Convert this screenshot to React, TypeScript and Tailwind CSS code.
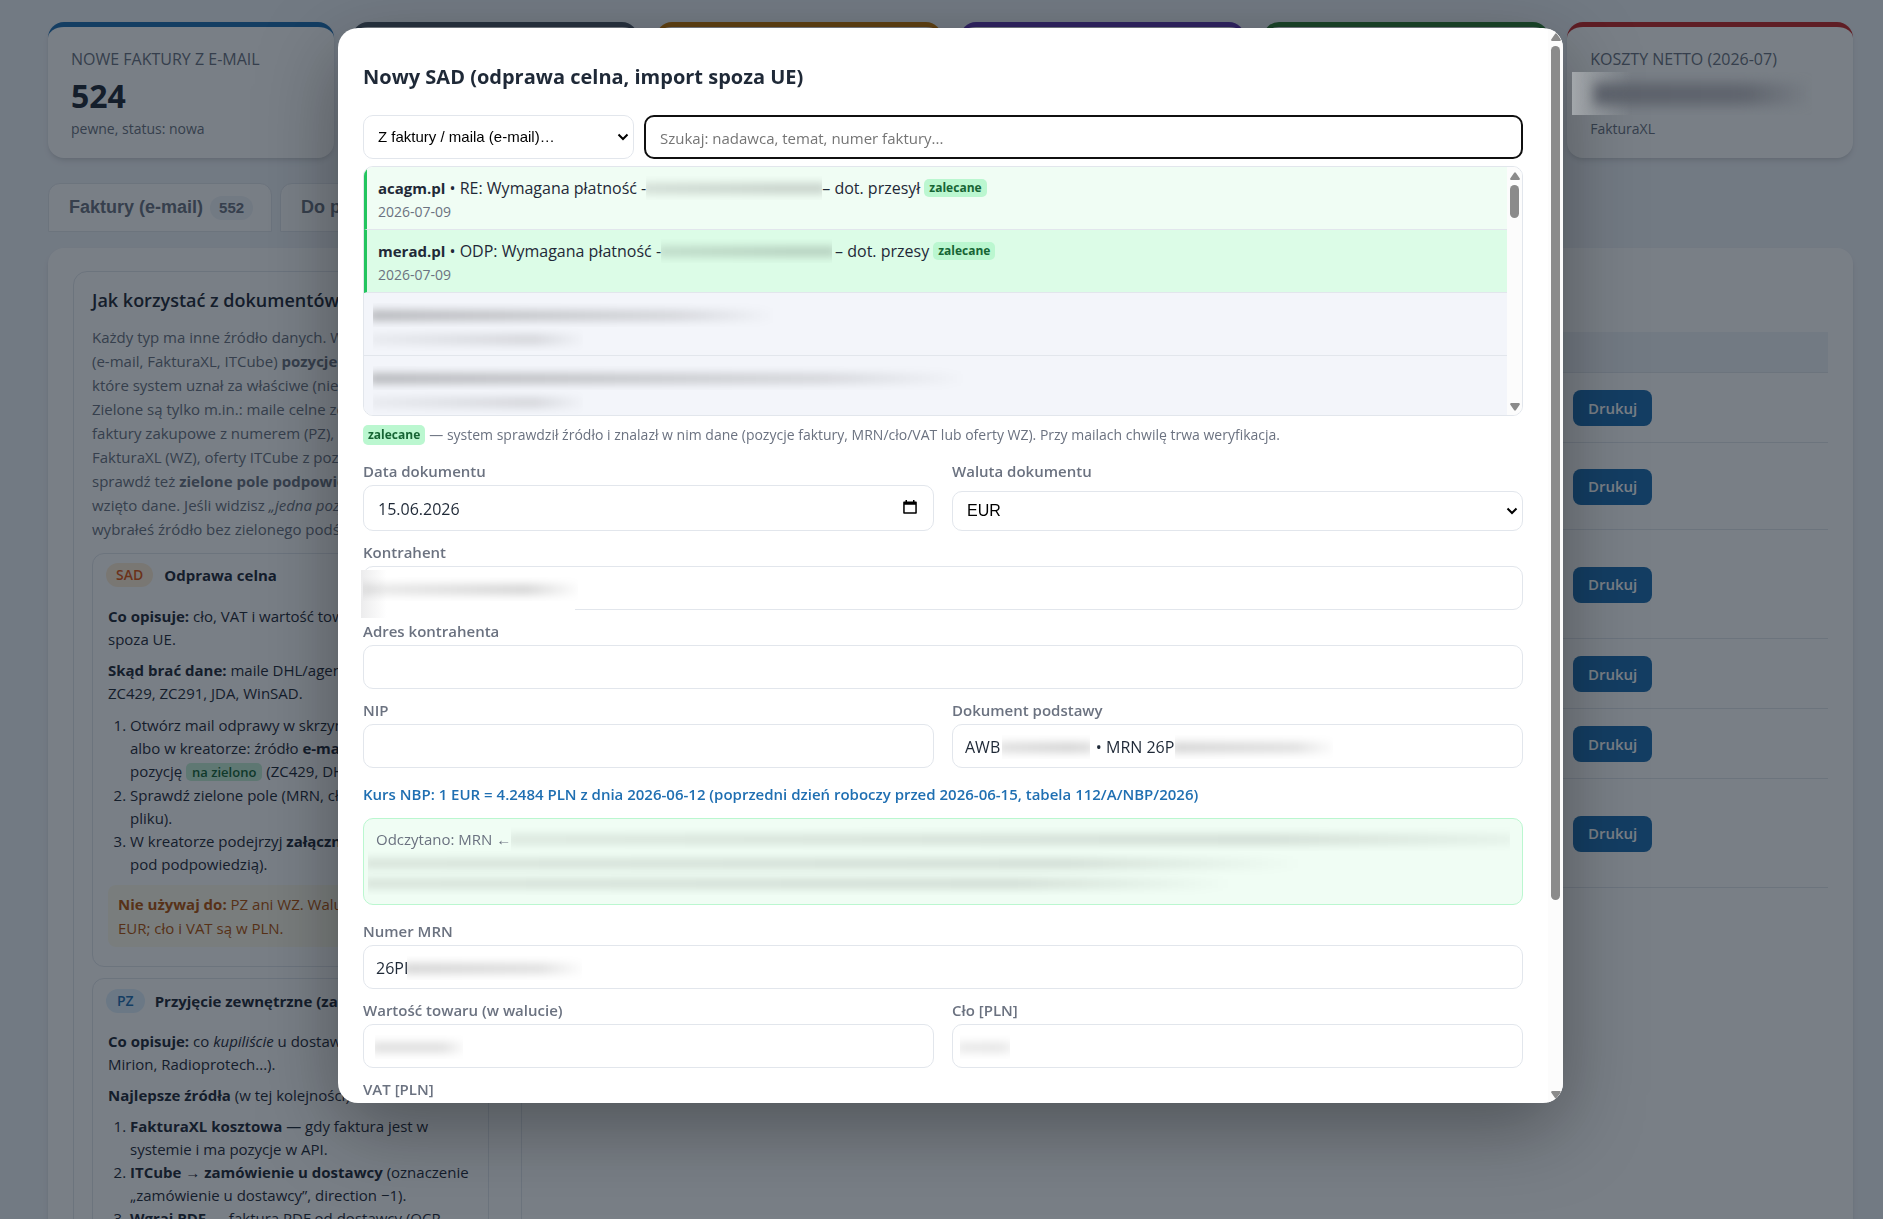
import React from 'react';
import clsx from 'clsx';

const NBSP = '\u00a0';

const statCards = [
  { label: 'Nowe faktury z e-mail', value: '524', note: 'pewne, status: nowa', border: 'border-t-[#1f6fb2]' },
  { label: '', value: '', note: '', border: 'border-t-[#4b5563]' },
  { label: '', value: '', note: '', border: 'border-t-[#c77700]' },
  { label: '', value: '', note: '', border: 'border-t-[#5e35b1]' },
  { label: '', value: '', note: '', border: 'border-t-[#2e7d32]' },
  { label: 'Koszty netto (2026-07)', value: null, note: 'FakturaXL', border: 'border-t-[#c62828]' },
];

const documentRows = [
  { id: 1, height: 'h-[70px]' },
  { id: 2, height: 'h-[87px]' },
  { id: 3, height: 'h-[109px]' },
  { id: 4, height: 'h-[70px]' },
  { id: 5, height: 'h-[70px]' },
  { id: 6, height: 'h-[109px]' },
];

const inputClass =
  'block w-full h-11 rounded-[10px] border border-[#e2e6ec] bg-white px-3 pt-[2px] text-[16px] text-[#1f2937] outline-none';

interface SmudgeProps {
  className?: string;
  tone?: string;
}

// Blurred strip that covers confidential data
const Smudge: React.FC<SmudgeProps> = ({ className, tone = 'from-black/20 via-black/15 to-transparent' }) => (
  <span aria-hidden="true" className={clsx('pointer-events-none flex h-6 items-center overflow-hidden', className)}>
    <span className={clsx('-mx-1 h-[9px] flex-1 bg-linear-to-r via-75% blur-[5px]', tone)} />
  </span>
);

const Chevron: React.FC = () => (
  <svg
    className="pointer-events-none absolute right-[5px] top-1/2 -mt-1 h-2 w-3"
    viewBox="0 0 12 8"
    fill="none"
    stroke="#000"
    strokeWidth="2"
    aria-hidden="true"
  >
    <path d="M1.5 1.5 6 6l4.500-4.500" />
  </svg>
);

const Recommended: React.FC<{ className?: string }> = ({ className }) => (
  <span
    className={clsx(
      'inline-block rounded-[5px] bg-[#bbf7d0] px-[5px] text-[12px] leading-[18px] font-bold text-[#166534]',
      className
    )}
  >
    zalecane
  </span>
);

const ScrollBar: React.FC<{ className?: string; thumb: string }> = ({ className, thumb }) => (
  <div
    aria-hidden="true"
    className={clsx('flex w-[15px] shrink-0 flex-col items-center bg-[#fcfcfc] pt-[5px] pb-1', className)}
  >
    <svg className="h-2 w-[10px] shrink-0" viewBox="0 0 10 8" fill="#8b8b8b">
      <path d="M4 1q1-1.500 2 0l3.800 5.500q.3 1-.8 1.500H1q-1.100-.5-.8-1.500z" />
    </svg>
    <div className={clsx('mt-[5px] w-[9px] rounded-full bg-[#8b8b8b]', thumb)} />
    <svg className="mt-auto h-2 w-[10px] shrink-0" viewBox="0 0 10 8" fill="#8b8b8b">
      <path d="M4 7q1 1.500 2 0l3.800-5.500Q10.100.5 9 0H1Q-.1.5.2 1.500z" />
    </svg>
  </div>
);

interface FieldProps {
  id: string;
  label: string;
  value?: string;
  children?: React.ReactNode;
}

const Field: React.FC<FieldProps> = ({ id, label, value = '', children }) => (
  <div className="pt-[9px]">
    <label htmlFor={id} className="mb-[2px] block text-[15px] leading-6 font-semibold text-[#6b7280]">
      {label}
    </label>
    <div className="relative">
      <input id={id} type="text" defaultValue={value} className={inputClass} />
      {children}
    </div>
  </div>
);

interface MailRowProps {
  sender: string;
  subject: string;
  rest: string;
  date: string;
  active?: boolean;
  smudge: string;
}

const MailRow: React.FC<MailRowProps> = ({ sender, subject, rest, date, active, smudge }) => (
  <li
    className={clsx(
      'h-[63px] border-b border-l-[3px] border-b-[#e2e6ec] border-l-[#22c55e] px-[11px] pt-[9px] whitespace-nowrap',
      active ? 'bg-[#dcfce7]' : 'bg-[#f0fdf4]'
    )}
  >
    <div className="flex items-center text-[16px] leading-6 text-[#1f2937]">
      <span>
        <strong className="text-[15px]">{sender}</strong> • {subject}
      </span>
      <Smudge className={smudge} tone="from-black/15 via-black/20 to-black/20" />
      <span>{rest}</span>
      <Recommended className="ml-1" />
    </div>
    <div className="text-[14px] leading-6 text-[#6b7280]">{date}</div>
  </li>
);

const HelpPanel: React.FC = () => (
  <section className="w-[449px] shrink-0 rounded-[14px] border border-[#e2e6ec] pt-4 pr-8 pl-[18px] whitespace-nowrap">
    <h2 className="text-[18px] leading-6 font-semibold">Jak korzystać z dokumentów</h2>
    <p className="mt-[13px] text-[15px] leading-[24px] text-[#6b7280]">
      Każdy typ ma inne źródło danych. W kreatorze
      <br />
      (e-mail, FakturaXL, ITCube) <strong>pozycje</strong>
      <br />
      które system uznał za właściwe (nie
      <br />
      Zielone są tylko m.in.: maile celne ze
      <br />
      faktury zakupowe z numerem (PZ), są
      <br />
      FakturaXL (WZ), oferty ITCube z pozycjami
      <br />
      sprawdź też <strong>zielone pole podpowiedzi</strong>
      <br />
      wzięto dane. Jeśli widzisz <em>„jedna pozycja”</em>
      <br />
      wybrałeś źródło bez zielonego podświetlenia
    </p>

    <article className="mt-3 rounded-[12px] border border-[#e2e6ec] px-[15px] pt-[9px] pb-[19px] text-[15px] leading-[24px]">
      <h3 className="-ml-[2px] flex items-center font-bold">
        <span className="mr-[11px] rounded-full bg-[#ffedd5] px-[10px] text-[14px] leading-[24px] font-semibold text-[#e0560f]">
          SAD
        </span>
        Odprawa celna
      </h3>
      <p className="mt-[18px] leading-[23px]">
        <strong>Co opisuje:</strong> cło, VAT i wartość towaru
        <br />
        spoza UE.
      </p>
      <p className="mt-2 leading-[23px]">
        <strong>Skąd brać dane:</strong> maile DHL/agencji
        <br />
        ZC429, ZC291, JDA, WinSAD.
      </p>
      <ol className="mt-[9px] list-decimal pl-[22px] leading-[23px]">
        <li>
          Otwórz mail odprawy w skrzynce
          <br />
          albo w kreatorze: źródło <strong>e-mail</strong>
          <br />
          pozycję{' '}
          <span className="rounded-[5px] bg-[#c6f0d6] px-[6px] text-[13px] font-semibold text-[#166534]">na zielono</span>{' '}
          (ZC429, DHL)
        </li>
        <li>
          Sprawdź zielone pole (MRN, cło
          <br />
          pliku).
        </li>
        <li>
          W kreatorze podejrzyj <strong>załącznik</strong>
          <br />
          pod podpowiedzią).
        </li>
      </ol>
      <p className="mt-[9px] rounded-lg bg-[#fffbeb] px-[10px] py-[7px] text-[#b45309]">
        <strong>Nie używaj do:</strong> PZ ani WZ. Waluta
        <br />
        EUR; cło i VAT są w PLN.
      </p>
    </article>

    <article className="mt-[11px] rounded-[12px] border border-[#e2e6ec] px-[15px] pt-[10px] pb-5 text-[15px] leading-[24px]">
      <h3 className="-ml-[2px] flex items-center font-bold">
        <span className="mr-[10px] rounded-full bg-[#e0f0fd] px-[11px] text-[14px] leading-[24px] font-semibold text-[#1f6fb2]">
          PZ
        </span>
        Przyjęcie zewnętrzne (zakup)
      </h3>
      <p className="mt-[17px] leading-[23px]">
        <strong>Co opisuje:</strong> co <em>kupiliście</em> u dostawcy
        <br />
        Mirion, Radioprotech...).
      </p>
      <p className="mt-2 leading-[23px]">
        <strong>Najlepsze źródła</strong> (w tej kolejności):
      </p>
      <ol className="mt-2 list-decimal pl-[22px] leading-[23px]">
        <li>
          <strong>FakturaXL kosztowa</strong> — gdy faktura jest w
          <br />
          systemie i ma pozycje w API.
        </li>
        <li>
          <strong>ITCube → zamówienie u dostawcy</strong> (oznaczenie
          <br />
          „zamówienie u dostawcy”, direction −1).
        </li>
        <li>
          <strong>Wgraj PDF</strong> — faktura PDF od dostawcy (OCR
        </li>
      </ol>
    </article>
  </section>
);

const Dashboard: React.FC = () => (
  <main className="h-screen overflow-hidden bg-[#f0f3f8] pt-[22px] pr-[30px] pl-12 text-[#1f2937]">
    <div className="grid grid-cols-6 gap-[18px]">
      {statCards.map((card) => (
        <div
          key={card.border}
          className={clsx('h-[136px] rounded-[16px] border-t-[5px] bg-white px-[23px] pt-5 shadow-md', card.border)}
        >
          <div className="text-[16px] leading-6 whitespace-nowrap text-[#6b7280] uppercase">{card.label}</div>
          <div className="relative h-12">
            {card.value === null ? (
              <div
                aria-hidden="true"
                className="absolute top-px -left-[18px] z-20 flex h-[43px] w-[240px] items-center overflow-hidden bg-linear-to-r from-[#a3a7ab] to-transparent to-25%"
              >
                <span className="ml-[22px] h-[22px] w-[218px] bg-linear-to-r from-[#5b6069] via-[#60656e] via-70% to-transparent blur-[6px]" />
              </div>
            ) : (
              <div className="text-[32px] leading-[50px] font-bold">{card.value}</div>
            )}
          </div>
          <div className="text-[14px] leading-5 text-[#6b7280]">{card.note}</div>
        </div>
      ))}
    </div>

    <nav className="mt-[25px] flex gap-2 font-['Liberation_Sans',sans-serif]">
      <button className="flex h-[49px] items-center rounded-t-[12px] border border-[#e2e6ec] bg-white pr-[18px] pl-5 text-[18px] font-bold text-[#6b7280]">
        Faktury (e-mail)
        <span className="ml-[7px] rounded-full bg-[#f0f3f8] px-[9px] text-[15px] leading-6">552</span>
      </button>
      <button className="flex h-[49px] items-center rounded-t-[12px] border border-[#e2e6ec] bg-white px-5 text-[18px] font-bold text-[#6b7280]">
        Do przypisania
      </button>
    </nav>

    <div className="mt-4 flex h-[1100px] items-start gap-[25px] rounded-[16px] bg-white px-[25px] py-[23px] shadow-md">
      <HelpPanel />
      <table className="mt-[61px] min-w-0 flex-1 border-collapse">
        <thead>
          <tr className="h-10 border-b border-[#e2e6ec] bg-[#f0f3f8]">
            <th scope="col" />
            <th scope="col" className="w-[267px]" />
          </tr>
        </thead>
        <tbody>
          {documentRows.map((row) => (
            <tr key={row.id} className={clsx('border-b border-[#e2e6ec]', row.height)}>
              <td />
              <td className="px-3 pt-[2px]">
                <button className="h-9 rounded-lg bg-[#1f6fb2] px-[15px] text-[15px] font-semibold text-white">
                  Drukuj
                </button>
              </td>
            </tr>
          ))}
        </tbody>
      </table>
    </div>
  </main>
);

const SadModal: React.FC = () => (
  <div className="fixed inset-0 z-10 flex items-start justify-center bg-[#0b1622]/55 pt-7 pl-[18px]">
    <div
      role="dialog"
      aria-labelledby="sad-title"
      className="flex h-[calc(100vh-144px)] w-full max-w-[1225px] overflow-hidden rounded-[20px] bg-white shadow-[0_24px_80px_rgba(0,0,0,0.35)]"
    >
      <form className="min-w-0 flex-1 overflow-hidden px-[25px]">
        <h1 id="sad-title" className="pt-[35px] text-[20px] leading-7 font-bold text-[#1f2937]">
          Nowy SAD (odprawa celna, import spoza UE)
        </h1>

        <div className="mt-6 flex gap-[10px]">
          <div className="relative w-[271px] shrink-0">
            <select
              aria-label="Źródło danych"
              className="h-11 w-full appearance-none rounded-[10px] border border-[#e2e6ec] bg-white px-[14px] font-['Liberation_Sans',sans-serif] text-[15px] text-black"
            >
              <option>Z faktury / maila (e-mail)…</option>
            </select>
            <Chevron />
          </div>
          <input
            type="search"
            aria-label="Szukaj"
            placeholder="Szukaj: nadawca, temat, numer faktury..."
            className="h-11 min-w-0 flex-1 rounded-[10px] border-2 border-[#101010] px-[14px] pt-[2px] text-[15px] outline-none placeholder:text-[#757575]"
          />
        </div>

        <div className="mt-[7px] flex h-[250px] overflow-hidden rounded-[10px] border border-[#e2e6ec]">
          <ul className="min-w-0 flex-1 bg-[#f3f5fa]">
            <MailRow
              sender="acagm.pl"
              subject="RE: Wymagana płatność -"
              rest="– dot. przesył"
              date="2026-07-09"
              smudge="w-[176px]"
            />
            <MailRow
              sender="merad.pl"
              subject="ODP: Wymagana płatność -"
              rest="– dot. przesy"
              date="2026-07-09"
              smudge="mr-[3px] w-[171px]"
              active
            />
            <li className="h-[63px] border-b border-[#e2e6ec] px-[9px] pt-[10px]">
              <Smudge className="w-[400px]" tone="from-black/30 via-black/15 to-transparent" />
              <Smudge className="w-[210px]" tone="from-black/5 via-black/15 to-transparent" />
            </li>
            <li className="h-[63px] px-[9px] pt-[10px]">
              <Smudge className="w-[590px]" tone="from-black/30 via-black/15 to-transparent" />
              <Smudge className="w-[210px]" tone="from-black/5 via-black/15 to-transparent" />
            </li>
          </ul>
          <ScrollBar thumb="h-[33px]" />
        </div>

        <p className="mt-2 flex items-center text-[14px] leading-[22px] text-[#6b7280]">
          <Recommended className="mr-1 leading-[20px]" />
          — system sprawdził źródło i znalazł w nim dane (pozycje faktury, MRN/cło/VAT lub oferty WZ). Przy mailach chwilę
          trwa weryfikacja.
        </p>

        <div className="mt-1 grid grid-cols-2 gap-x-[18px]">
          <div className="pt-[9px]">
            <label htmlFor="doc-date" className="mb-[2px] block text-[15px] leading-6 font-semibold text-[#6b7280]">
              Data dokumentu
            </label>
            <div className="relative">
              <input
                id="doc-date"
                type="text"
                defaultValue="15.06.2026"
                className="block h-[46px] w-full rounded-[10px] border border-[#e2e6ec] bg-white px-[14px] pt-[2px] text-[16px] text-[#1f2937]"
              />
              <svg className="absolute top-[14px] right-4 h-4 w-4" viewBox="0 0 16 16" aria-hidden="true">
                <path
                  fillRule="evenodd"
                  d="M3.500 1H5v1.500h6V1h1.500v1.500H14a.8.8 0 0 1 .8.8V14a.8.8 0 0 1-.8.8H2a.8.8 0 0 1-.8-.8V3.300a.8.8 0 0 1 .8-.8h1.500zM2.700 5.800v7.500h10.600V5.800z"
                />
              </svg>
            </div>
          </div>
          <div className="flex flex-col justify-between pt-[9px]">
            <label htmlFor="doc-currency" className="block text-[15px] leading-6 font-semibold text-[#6b7280]">
              Waluta dokumentu
            </label>
            <div className="relative">
              <select
                id="doc-currency"
                className="block h-10 w-full appearance-none rounded-[10px] border border-[#e2e6ec] bg-white px-[14px] font-['Liberation_Sans',sans-serif] text-[16px] text-black"
              >
                <option>EUR</option>
              </select>
              <Chevron />
            </div>
          </div>
        </div>

        <Field id="contractor" label="Kontrahent">
          <span
            aria-hidden="true"
            className="absolute top-1 -left-[2px] h-12 w-[214px] bg-linear-to-r from-[#ececed] to-white to-12%"
          />
          <Smudge className="absolute top-[11px] left-0 w-[215px]" tone="from-black/10 via-black/20 to-transparent" />
        </Field>
        <Field id="address" label="Adres kontrahenta" />
        <div className="grid grid-cols-2 gap-x-[18px]">
          <Field id="nip" label="NIP" />
          <Field id="base-doc" label="Dokument podstawy" value={`AWB${NBSP.repeat(23)}• MRN 26P`}>
            <Smudge className="absolute top-[11px] left-[50px] w-[88px]" tone="from-black/15 via-black/20 to-black/15" />
            <Smudge className="absolute top-[11px] left-[223px] w-[158px]" />
          </Field>
        </div>

        <p className="mt-[14px] text-[15px] leading-6 font-semibold text-[#1f6fb2]">
          Kurs NBP: 1 EUR = 4.2484 PLN z dnia 2026-06-12 (poprzedni dzień roboczy przed 2026-06-15, tabela 112/A/NBP/2026)
        </p>

        <div className="mt-3 mb-[5px] h-[87px] rounded-[10px] border border-[#bbf7d0] bg-[#f0fdf4] px-3 pt-2">
          <div className="flex items-center text-[15px] leading-6 text-[#6b7280]">
            Odczytano: MRN ←
            <Smudge className="flex-1" tone="from-black/10 via-black/15 to-black/5" />
          </div>
          <div className="-ml-2">
            <Smudge className="w-[930px]" tone="from-black/12 via-black/15 to-transparent" />
            <Smudge className="-mt-1 w-[860px]" tone="from-black/12 via-black/15 to-transparent" />
          </div>
        </div>

        <Field id="mrn" label="Numer MRN" value="26PL">
          <Smudge className="absolute top-[11px] left-[44px] w-[175px] bg-white" />
        </Field>
        <div className="grid grid-cols-2 gap-x-[18px]">
          <Field id="goods-value" label="Wartość towaru (w walucie)">
            <Smudge className="absolute top-[11px] left-3 w-[88px]" tone="from-black/15 via-black/15 to-transparent" />
          </Field>
          <Field id="duty" label="Cło [PLN]">
            <Smudge className="absolute top-[11px] left-2 w-[50px]" tone="from-black/10 via-black/12 to-black/5" />
          </Field>
          <Field id="vat" label="VAT [PLN]" />
        </div>
      </form>
      <ScrollBar thumb="h-[854px]" />
    </div>
  </div>
);

export default function App() {
  return (
    <div className="font-['Open_Sans','Noto_Sans',sans-serif]">
      <Dashboard />
      <SadModal />
    </div>
  );
}
